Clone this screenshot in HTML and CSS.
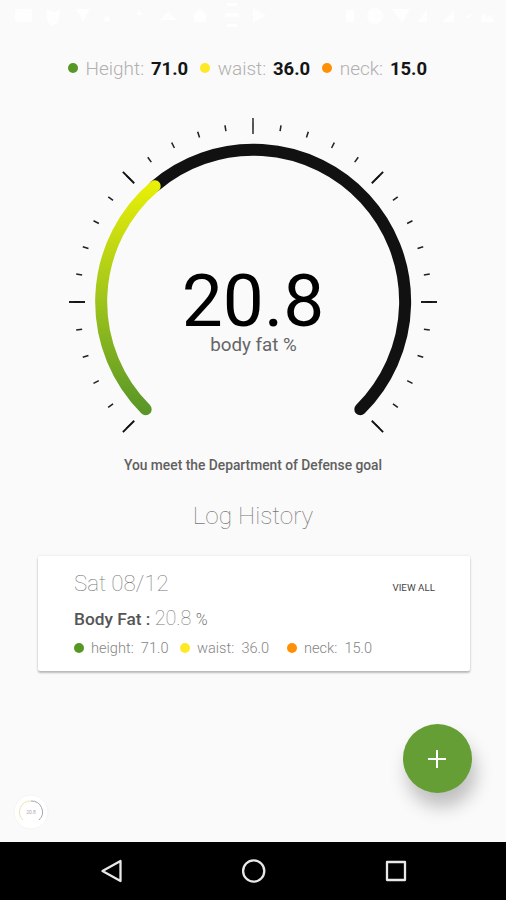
FILE: index.html
```html
<!doctype html>

<html>
  <head>
    <meta charset="utf-8">
    <title>Body Fat</title>
    <link rel="stylesheet" href="styles.css">
  </head>
  <body>

    <div class="status">
      <svg width="506" height="34" fill="#fff" fill-opacity="0.7">
        <rect x="15" y="9" width="17" height="13" rx="2"/>
        <path d="M46 9l8 3 7-3-3 14-6 3-5-5z"/>
        <path d="M76 9h14l-7 13z"/>
        <circle cx="107" cy="19" r="3"/>
        <path d="M139 10l4 5h-7zM160 20l8-9 9 9z"/>
        <path d="M194 22V14l6-6 6 6v8z"/>
        <path d="M227 3h10v3h-10zM225 13h14v4h-14zM227 24h10v3h-10z"/>
        <path d="M253 8l13 7-13 8z"/>
        <path d="M346 10h8v12h-8z"/>
        <circle cx="375" cy="16" r="8"/>
        <path d="M392 9h18l-8 14zM418 22l9-13v13zM442 22l12-12v12z"/>
        <path d="M465 17l6-3v3zM480 22l3-9 4 5 4-4 3 8z"/>
      </svg>
    </div>

    <div class="summary">
      <span class="dot green"></span><span>Height:</span><b>71.0</b>
      <span class="dot yellow"></span><span>waist:</span><b>36.0</b>
      <span class="dot orange"></span><span>neck:</span><b>15.0</b>
    </div>

    <div class="gauge">
      <svg width="380" height="340" viewBox="-190 -190 380 340" fill="none">
        <defs>
          <linearGradient id="level" gradientUnits="userSpaceOnUse" x1="0" y1="110" x2="0" y2="-118">
            <stop offset="0" stop-color="#589627"/>
            <stop offset="0.5" stop-color="#a0c51b"/>
            <stop offset="1" stop-color="#e8ef08"/>
          </linearGradient>
          <path id="tick" d="M0-168V-184"/>
        </defs>
        <!-- small ticks, one each 9 degrees -->
        <path class="small-ticks" pathLength="270" d="M-124.5 124.5A176 176 0 1 1 124.5 124.5"/>
        <g class="ticks">
          <use href="#tick" transform="rotate(-135)"/>
          <use href="#tick" transform="rotate(-90)"/>
          <use href="#tick" transform="rotate(-45)"/>
          <use href="#tick" class="top-tick"/>
          <use href="#tick" transform="rotate(45)"/>
          <use href="#tick" transform="rotate(90)"/>
          <use href="#tick" transform="rotate(135)"/>
        </g>
        <path class="track" d="M-98.3 -115.8A151.8 151.8 0 0 1 107.3 107.3"/>
        <path class="level" d="M-107.3 107.3A151.8 151.8 0 0 1 -98.3 -115.8"/>
        <text class="value" x="0" y="24" text-anchor="middle">20.8</text>
        <text class="unit" x="0.5" y="49" text-anchor="middle">body fat %</text>
      </svg>
    </div>

    <p class="goal">You meet the Department of Defense goal</p>

    <h2>Log History</h2>

    <div class="card">
      <div class="card-head">
        <h3>Sat 08/12</h3>
        <a>VIEW ALL</a>
      </div>
      <div class="fat"><b>Body Fat :</b> <span>20.8</span> <i>%</i></div>
      <div class="sizes">
        <span class="c-height"><span class="dot green"></span>height:&nbsp; 71.0</span>
        <span class="c-waist"><span class="dot yellow"></span>waist:&nbsp; 36.0</span>
        <span><span class="dot orange"></span>neck:&nbsp; 15.0</span>
      </div>
    </div>

    <div class="add">
      <svg width="18" height="18" stroke="#fff" stroke-width="2"><path d="M9 0V18M0 9H18"/></svg>
    </div>

    <div class="thumb">
      <svg width="36" height="36" viewBox="-18 -18 36 36" fill="none">
        <circle r="17" fill="#fff" stroke="#f5f5f5"/>
        <path d="M-8 8A11 11 0 0 1 0-11" stroke="#e4e7b4"/>
        <path d="M0-11A11 11 0 0 1 8 8" stroke="#aaa3ad"/>
        <text y="2" text-anchor="middle">20.8</text>
      </svg>
    </div>

    <div class="nav">
      <svg width="506" height="58" fill="none" stroke="#e8e8e8" stroke-width="2.3">
        <path d="M102.5 29L120.5 19V39Z" stroke-linejoin="round"/>
        <circle cx="253.7" cy="29" r="10.6"/>
        <rect x="387" y="20" width="18" height="18" stroke-linejoin="round"/>
      </svg>
    </div>

  </body>
</html>
```
FILE: styles.css
```css
body {
  background:   #fafafa;
  color:        #111;
  font:         18px/24px Roboto, "Liberation Sans", sans-serif;
  height:       900px;
  margin:       0;
  overflow:     hidden;
  position:     relative;
}

svg {
  display: block;
}

.status {
  height: 34px;
}

.dot {
  border-radius: 50%;
  display: inline-block;
  height: 10px;
  width: 10px;
}
.green {
  background: #569823;
}
.yellow {
  background: #ffe826;
}
.orange {
  background: #ff9006;
}

.summary {
  align-items: center;
  color: #b0b0b0;
  display: flex;
  font-size: 19px;
  font-weight: 300;
  height: 24px;
  padding: 23px 0 0 68px;
}
.summary .dot {
  margin: -2px 7.5px 0 0;
}
.summary b {
  color: #151515;
  font-size: 18.5px;
  font-weight: 700;
  margin: 0 12px 0 6.8px;
}

.gauge {
  height: 340px;
  margin: 31px 0 0 63px;
}
.small-ticks {
  stroke: #222;
  stroke-dasharray: 0.5 8.5;
  stroke-dashoffset: 0.25;
  stroke-width: 6;
}
.ticks {
  stroke: #111;
  stroke-width: 1.9;
}
.top-tick {
  stroke: #555;
}
.track,
.level {
  stroke: #111;
  stroke-linecap: round;
  stroke-width: 12;
}
.level {
  stroke: url(#level);
}
.value {
  fill: #000;
  font-size: 73px;
}
.unit {
  fill: #666;
  font-size: 18.8px;
}

.goal {
  color: #606060;
  font-size: 13.8px;
  font-weight: 500;
  margin: 1px 0 0;
  text-align: center;
}

h2,
h3 {
  color: #777;
  font-size: 24.4px;
  font-weight: 100;
  margin: 0;
}
h2 {
  line-height: 32px;
  margin-top: 23px;
  text-align: center;
}

.card {
  background: #fff;
  border-radius: 2px;
  box-shadow: 0 2px 2px rgba(0, 0, 0, 0.24), 0 0 3px rgba(0, 0, 0, 0.1);
  box-sizing: border-box;
  height: 115px;
  margin: 24px 36px 0 38px;
  padding: 12px 35px 0 36px;
}
.card-head {
  align-items: center;
  display: flex;
  height: 30px;
  justify-content: space-between;
}
h3 {
  font-size: 22.3px;
}
.card-head a {
  color: #444;
  font-size: 9.8px;
  padding-top: 9px;
}
.fat {
  color: #777;
  font-weight: 100;
  line-height: 30px;
  margin-top: 6px;
}
.fat b {
  color: #555;
  font-size: 17.3px;
  font-weight: 500;
}
.fat span {
  font-size: 19.8px;
}
.fat i {
  font-size: 16px;
  font-style: normal;
  font-weight: 300;
}
.sizes {
  color: #858585;
  display: flex;
  font-size: 14.6px;
  font-weight: 300;
  line-height: 26px;
}
.sizes .dot {
  margin-right: 7px;
}
.c-height {
  width: 106px;
}
.c-waist {
  width: 107px;
}

.add {
  align-items: center;
  background: #659e35;
  border-radius: 50%;
  box-shadow: 4px 14px 18px rgba(0, 0, 0, 0.24);
  display: flex;
  height: 69px;
  justify-content: center;
  left: 402.5px;
  position: absolute;
  top: 724px;
  width: 69px;
}

.thumb {
  left: 13px;
  position: absolute;
  top: 794px;
}
.thumb text {
  fill: #aaa;
  font-size: 5px;
}

.nav {
  background: #000;
  bottom: 0;
  height: 58px;
  left: 0;
  position: absolute;
  right: 0;
}
```
